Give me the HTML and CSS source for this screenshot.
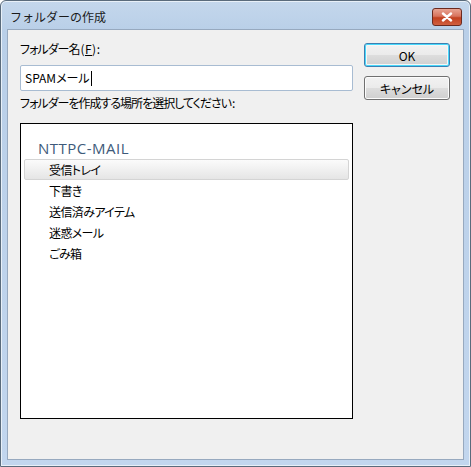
FILE: index.html
```html
<!DOCTYPE html>
<html lang="ja">
<head>
<meta charset="utf-8">
<link rel="stylesheet" href="styles.css">
</head>
<body>
<div class="window">
  <div class="titlebar">
    <span class="title">フォルダーの作成</span>
    <span class="close"><svg width="14" height="10" viewBox="0 0 14 10"><path d="M3 1.5 L11 8.5 M11 1.5 L3 8.5" stroke="#fff" stroke-width="2.4" stroke-linecap="round"/></svg></span>
  </div>
  <div class="client">
    <div class="main">
      <label class="label">フォルダー名<span class="ascii">(<u>F</u>):</span></label>
      <div class="input">SPAMメール<span class="caret"></span></div>
      <label class="label label2">フォルダーを作成する場所を選択してください<span class="ascii">:</span></label>
      <div class="tree">
        <div class="root">NTTPC-MAIL</div>
        <div class="row selected">受信トレイ</div>
        <div class="row">下書き</div>
        <div class="row">送信済みアイテム</div>
        <div class="row">迷惑メール</div>
        <div class="row">ごみ箱</div>
      </div>
    </div>
    <div class="side">
      <button class="btn default">OK</button>
      <button class="btn">キャンセル</button>
    </div>
  </div>
</div>
</body>
</html>
```
FILE: styles.css
```css
* { box-sizing: border-box; }
html, body { margin: 0; padding: 0; }
body {
  width: 471px;
  height: 467px;
  font-family: "Noto Sans CJK JP", "Noto Sans", sans-serif;
  font-size: 12px;
  color: #000;
  background: #ffffff;
}
.window {
  width: 471px;
  height: 467px;
  border: 1px solid #5a6b7c;
  border-radius: 6px 6px 0 0;
  background: linear-gradient(to bottom, #c4d7ec 0px, #b9cfe8 30px, #c2d6ee 100%);
  display: flex;
  flex-direction: column;
  padding: 0 6px 6px 6px;
  box-shadow: inset 0 0 0 1px #e8f0f8;
}
.titlebar {
  height: 28px;
  display: flex;
  align-items: center;
  justify-content: space-between;
  padding: 0 2px 0 3px;
}
.title {
  font-size: 12px;
  color: #1a1a1a;
  margin-top: 2px;
}
.close {
  width: 30px;
  height: 18px;
  margin-top: 3px;
  border: 1px solid #6b2a1f;
  border-radius: 3px;
  background: linear-gradient(to bottom, #e8a493 0%, #d8735d 45%, #c2401f 55%, #d06040 100%);
  display: flex;
  align-items: center;
  justify-content: center;
}
.client {
  flex: 1;
  background: #f0f0f0;
  border: 1px solid #97a9bf;
  display: flex;
  padding: 10px 0 0 12px;
}
.main {
  width: 333px;
  display: flex;
  flex-direction: column;
  font-feature-settings: "palt";
}
.label {
  display: block;
  height: 17px;
  line-height: 17px;
  letter-spacing: -1px;
}
.label .ascii { letter-spacing: 0.5px; margin-left: 1px; }
.label u { text-decoration: underline; }
.input {
  margin-top: 8px;
  height: 26px;
  background: #fff;
  border: 1px solid #a8bcd2;
  border-radius: 2px;
  padding-left: 4px;
  line-height: 24px;
  display: flex;
  align-items: center;
}
.caret {
  display: inline-block;
  width: 1px;
  height: 15px;
  background: #000;
  margin-left: 1px;
}
.label2 { margin-top: 3px; }
.tree {
  margin-top: 12px;
  height: 296px;
  background: #fff;
  border: 1px solid #000;
  padding: 14px 3px 0 3px;
}
.root {
  font-family: "Open Sans", "Noto Sans", sans-serif;
  font-size: 15px;
  letter-spacing: 0.5px;
  color: #3e5a7a;
  height: 21px;
  line-height: 20px;
  padding-left: 14px;
}
.row {
  height: 21px;
  line-height: 20px;
  padding-left: 24px;
  letter-spacing: -0.6px;
  border: 1px solid transparent;
}
.row.selected {
  border: 1px solid #d4d4d4;
  border-radius: 2px;
  background: linear-gradient(to bottom, #fbfbfb 0%, #eeeeee 60%, #e5e5e5 100%);
}
.side {
  display: flex;
  flex-direction: column;
  gap: 9px;
  margin-left: 11px;
  padding-top: 3px;
}
.btn {
  width: 86px;
  height: 24px;
  font-family: "Noto Sans CJK JP", "Noto Sans", sans-serif;
  font-size: 12px;
  color: #000;
  border: 1px solid #707070;
  border-radius: 3px;
  background: linear-gradient(to bottom, #f2f2f2 0%, #ebebeb 48%, #dddddd 52%, #cfcfcf 100%);
  box-shadow: inset 0 0 0 1px #fcfcfc;
  padding: 0;
  font-feature-settings: "palt";
}
.btn.default {
  border-color: #3c7fb1;
  box-shadow: inset 0 0 0 1px #48d8fb, inset 0 0 0 2px #f6f6f6;
}
```
